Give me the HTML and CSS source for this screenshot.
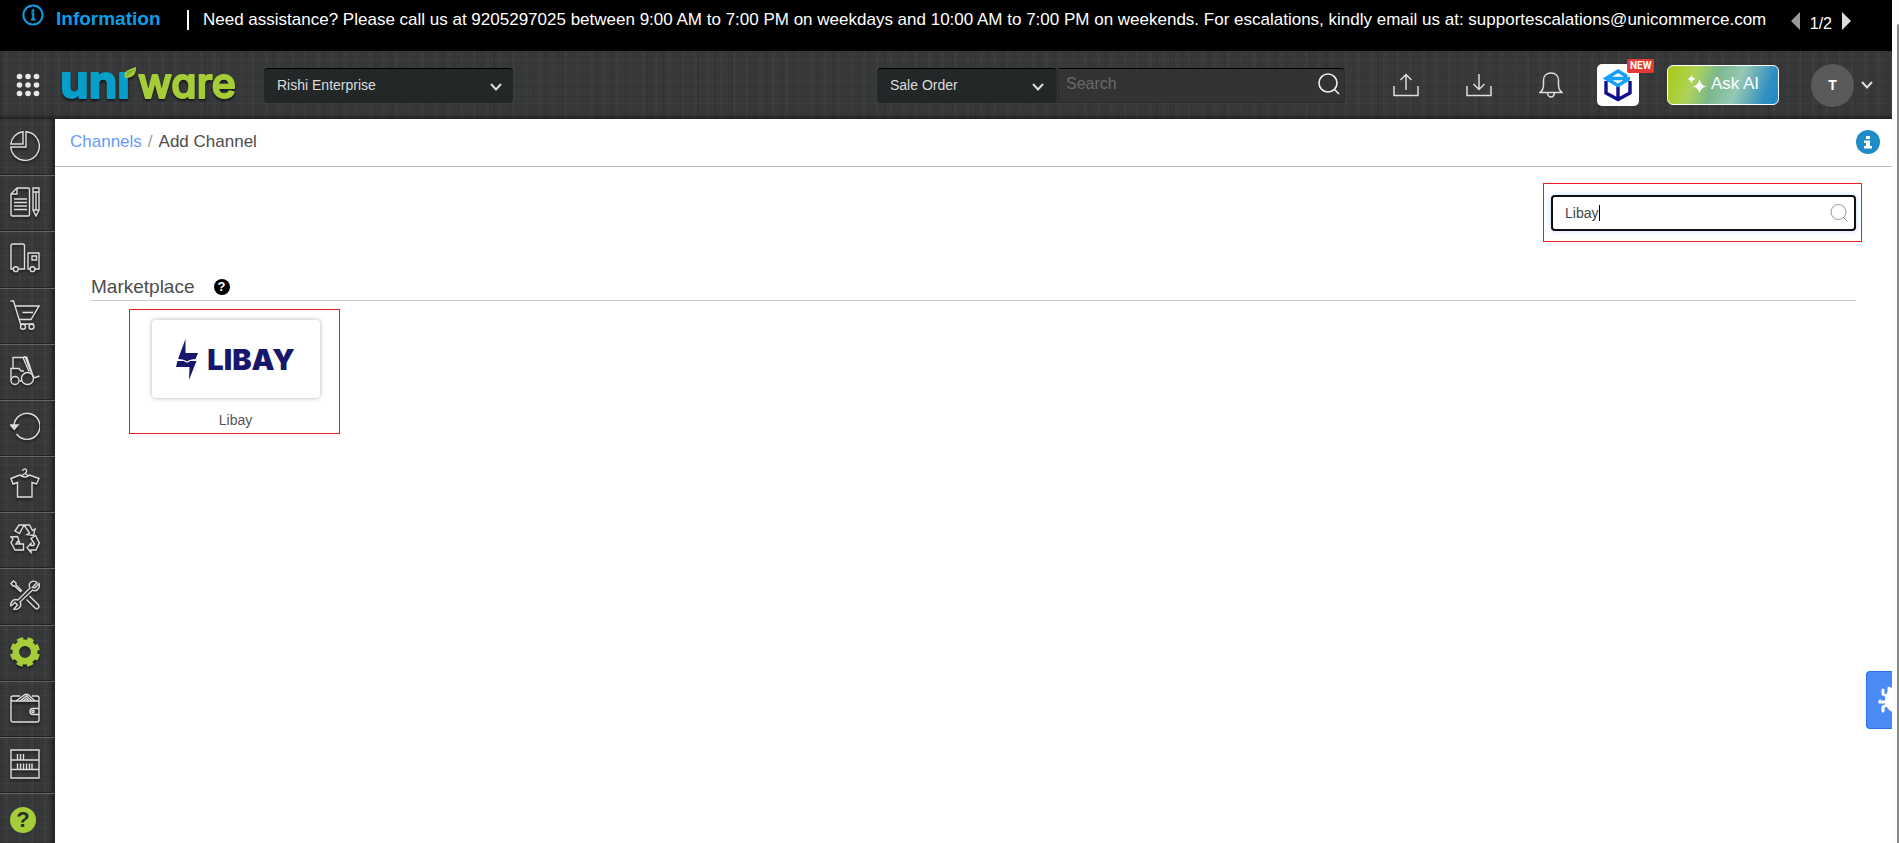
FILE: index.html
```html
<!DOCTYPE html>
<html lang="en">
<head>
    <meta charset="UTF-8">
    <meta name="viewport" content="width=device-width, initial-scale=1.0">
    <title>Add Channel - Uniware</title>
    <link rel="stylesheet" href="styles.css">
</head>
<body>
    <div class="notice">
        <svg class="notice-icon" viewBox="0 0 22 22" width="22" height="22" fill="none" stroke="#0a9fe8" stroke-width="2">
            <circle cx="11" cy="11" r="9.6"/>
            <path d="M9.4 9.4H11.2V15M9 15.4H13.4"/>
            <circle cx="11" cy="6.6" r=".6"/>
        </svg>
        <strong class="notice-title">Information</strong>
        <p class="notice-text">Need assistance? Please call us at 9205297025 between 9:00 AM to 7:00 PM on weekdays and 10:00 AM to 7:00 PM on weekends. For escalations, kindly email us at: supportescalations@unicommerce.com</p>
        <div class="pager">
            <button type="button" class="prev" aria-label="Previous"></button>
            <span>1/2</span>
            <button type="button" class="next" aria-label="Next"></button>
        </div>
    </div>

    <header class="topbar">
        <button type="button" class="icon-btn apps" aria-label="Apps">
            <svg viewBox="0 0 24 24" width="24" height="24" fill="#e8e8e8">
                <circle cx="3.5" cy="3.5" r="2.8"/><circle cx="12" cy="3.5" r="2.8"/><circle cx="20.5" cy="3.5" r="2.8"/>
                <circle cx="3.5" cy="12" r="2.8"/><circle cx="12" cy="12" r="2.8"/><circle cx="20.5" cy="12" r="2.8"/>
                <circle cx="3.5" cy="20.5" r="2.8"/><circle cx="12" cy="20.5" r="2.8"/><circle cx="20.5" cy="20.5" r="2.8"/>
            </svg>
        </button>
        <a href="#" class="logo">
            <svg viewBox="0 0 172 36" width="172" height="36">
                <text class="logo-uni" x="-2" y="31">un&#305;</text>
                <text class="logo-ware" x="76" y="31">ware</text>
                <path d="M63 11C61 4 66 3 74 0C74 7 72 11 63 11Z" fill="#a5cd39"/>
                <path d="M64 9L72 3M65 6L69 4" stroke="#6f9a1e" fill="none"/>
            </svg>
        </a>
        <div class="select facility">
            <select aria-label="Facility"><option>Rishi Enterprise</option></select>
            <svg viewBox="0 0 12 8" width="12" height="8"><path d="M1 1L6 6.5L11 1"/></svg>
        </div>

        <div class="search">
            <div class="select scope">
                <select aria-label="Search in"><option>Sale Order</option></select>
                <svg viewBox="0 0 12 8" width="12" height="8"><path d="M1 1L6 6.5L11 1"/></svg>
            </div>
            <div class="search-box">
                <input type="text" placeholder="Search" aria-label="Search">
                <button type="button" class="icon-btn" aria-label="Search">
                    <svg viewBox="0 0 22 22" width="22" height="22" fill="none" stroke="#eee" stroke-width="1.6">
                        <circle cx="10" cy="10" r="9"/><path d="M16 16L21 21"/>
                    </svg>
                </button>
            </div>
        </div>

        <nav class="tools">
            <button type="button" class="icon-btn" aria-label="Uploads">
                <svg viewBox="0 0 26 24" width="26" height="24" fill="none" stroke="#ddd" stroke-width="1.5">
                    <path d="M1 13V22.5H25V13"/><path d="M13 17V1.5M7.5 7L13 1.5L18.5 7"/>
                </svg>
            </button>
            <button type="button" class="icon-btn" aria-label="Downloads">
                <svg viewBox="0 0 26 24" width="26" height="24" fill="none" stroke="#ddd" stroke-width="1.5">
                    <path d="M1 13V22.5H25V13"/><path d="M13 1V16M7.5 11L13 16.5L18.5 11"/>
                </svg>
            </button>
            <button type="button" class="icon-btn" aria-label="Notifications">
                <svg viewBox="0 0 24 26" width="24" height="26" fill="none" stroke="#ddd" stroke-width="1.5">
                    <path d="M1 20.5C3.5 18.500 4.500 16 4.500 13V8.500C4.500 4 7.500 1 12 1S19.500 4 19.500 8.500V13C19.500 16 20.500 18.500 23 20.500Z"/>
                    <path d="M8.500 20.500A3.500 4.500 0 0 0 15.500 20.500"/>
                </svg>
            </button>
            <a href="#" class="cube" aria-label="New app">
                <svg viewBox="0 0 30 34" width="30" height="34" fill="none" stroke-width="3.4">
                    <path d="M3 13V25L15 31.500L27 25V13M15 18V31" stroke="#10108c"/>
                    <path d="M26.500 10.500L15 17.500L3 10.500L15 3L24 8.500M3 10.500H27" stroke="#16a0fb"/>
                </svg>
                <span class="badge">NEW</span>
            </a>
            <button type="button" class="ask">
                <svg viewBox="0 0 20 20" width="20" height="20" fill="#fff">
                    <path d="M12.500 5Q13.500 11.500 19.500 12.500Q13.500 13.500 12.500 19.500Q11.500 13.500 5.500 12.500Q11.500 11.500 12.500 5Z"/>
                    <path d="M4.500 .5Q5.200 4.300 9 5Q5.200 5.700 4.500 9.500Q3.800 5.700 .2 5Q3.800 4.300 4.500 .5Z"/>
                </svg>
                Ask AI
            </button>
            <button type="button" class="user" aria-label="Account">
                <span class="avatar">T</span>
                <svg viewBox="0 0 12 8" width="12" height="8"><path d="M1 1L6 6.5L11 1"/></svg>
            </button>
        </nav>
    </header>

    <div class="layout">
        <nav class="sidebar">
            <a href="#" aria-label="Dashboard">
                <svg viewBox="0 0 30 30"><path d="M16 .8A14.300 14.300 0 1 1 .8 16H16Z"/><path d="M13 .8A14 14 0 0 0 .8 13H13Z"/></svg>
            </a>
            <a href="#" aria-label="Orders">
                <svg viewBox="0 0 30 30"><path d="M7 1H18Q19.500 1 19.500 2.500V27.500Q19.500 29 18 29H2.500Q1 29 1 27.500V7ZM7 1V7H1M4 12H17M4 15.500H17M4 19H17M4 22.500H17"/><path d="M23 1H29V23L26 29L23 23ZM23 5H29M23 23H29M26 5V23"/></svg>
            </a>
            <a href="#" aria-label="Products">
                <svg viewBox="0 0 30 30"><path d="M3.500 26H1V3Q1 1 3 1H12.500Q14.500 1 14.500 3V26H8"/><path d="M20 26H18V10H29V26H25M22 13H26.500V17H22Z"/><circle cx="5.800" cy="26.200" r="2.400"/><circle cx="22.500" cy="26.200" r="2.400"/></svg>
            </a>
            <a href="#" aria-label="Purchase">
                <svg viewBox="0 0 30 30"><path d="M.5 1H3.500L10.500 24H24M5 6H29L21 19.500H9M12.500 12.500H23"/><circle cx="13" cy="26.800" r="2.500"/><circle cx="21.500" cy="26.800" r="2.500"/></svg>
            </a>
            <a href="#" aria-label="Inbound">
                <svg viewBox="0 0 30 30"><path d="M3 12V1.500H13L19 15.500M1 24V12.500H9L11 15H14M16.500 .5L23.500 21.500H25.500L29.500 20M13 1.500L15 .5L21 16M9.500 25H12"/><circle cx="5" cy="24.500" r="4"/><circle cx="17.500" cy="22.500" r="6"/></svg>
            </a>
            <a href="#" aria-label="Returns">
                <svg viewBox="0 0 30 30"><path d="M6.500 22A13 13 0 1 0 4 14"/><path d="M.5 13H8L4.200 17.500Z" fill="#ddd"/></svg>
            </a>
            <a href="#" aria-label="Inventory">
                <svg viewBox="0 0 30 30"><path d="M10 7L1 10.500L3 16L7.500 14.500V29H22V14.500L26.500 16L29 10.500L19.500 7Q15 11 10 7Z"/><path d="M11 8L15 5.500L19 8M15 5.500Q18 3 15.500 1Q13 .5 12.500 3"/></svg>
            </a>
            <a href="#" aria-label="Reshipment">
                <svg viewBox="0 0 30 30"><path d="M5 7L9 1H14L9.500 9.500ZM14 1H19.500L22.500 6.500L25 5L23.500 11.500L17 10.500L19.500 9ZM21 14.500L25.500 11.500L29.300 19L26 26H21V28.500L17 23.500L21 19.500V21.500H23.500L24.500 20ZM13.500 20V26H5L1 18.500L3 15L1 13L7.500 12.500L9.500 18.500L7.500 17.500L6 20Z"/></svg>
            </a>
            <a href="#" aria-label="Tools">
                <svg viewBox="0 0 30 30"><path d="M1 3.500L3.500 1L6 3L6 5L11.500 10.500L10.500 11.500L4.500 6H3ZM19.500 16L28.500 25Q29.500 27 28 28.500Q26.500 29.500 25 28L16.500 19.500"/><path d="M22.500 7.500L27 2.500Q24 0 21 2Q18 4.500 20 8L8 20Q4.500 18.500 2 21.500Q0 24 1 26L5 22.500L7.500 25L4 29Q6.500 30 9 28Q12 25 10 22L22.500 10Q26 12 28.500 8.500Q30 6 29 3.500L25 8Z"/></svg>
            </a>
            <a href="#" aria-label="Settings">
                <svg viewBox="0 0 30 30" class="gear"><circle cx="15" cy="15" r="9.200" stroke-width="6.600"/><circle cx="15" cy="15" r="12.800" stroke-width="4.200" stroke-dasharray="6.050 4.003" transform="rotate(9 15 15)"/></svg>
            </a>
            <a href="#" aria-label="Billing">
                <svg viewBox="0 0 30 30"><path d="M6 8H29V27Q29 29 27 29H3Q1 29 1 27V5Q1 3 3 3H10M1 6Q1 8 3 8H6M22 3H27Q29 3 29 5V8"/><path d="M6 8L15 1.500H18L25 8M10 8L16.500 3L22 8M13 8L16.500 5.500L19 8M29 15.500H22.500Q20 15.500 20 18.500T22.500 21.500H29"/><circle cx="23" cy="18.500" r="1.200"/></svg>
            </a>
            <a href="#" aria-label="Warehouse">
                <svg viewBox="0 0 30 30"><path d="M1 1H29V29H1ZM1 11H29M1 20.500H29M7.500 11V5M10.500 11V5M13.500 11V5M7.500 20.500V14.500M10.500 20.500V14.500M13.500 20.500V14.500M16.500 20.500V14.500M19.500 20.500V14.500M22 20.500V14.500"/></svg>
            </a>
            <a href="#" class="help" aria-label="Help"><span>?</span></a>
        </nav>

        <main class="main">
            <div class="breadcrumb">
                <a href="#">Channels</a><span class="slash">/</span><span>Add Channel</span>
                <button type="button" class="info" aria-label="Page info">
                    <svg viewBox="0 0 24 24" width="24" height="24">
                        <circle cx="12" cy="12" r="12" fill="#1f8bc9"/>
                        <path d="M10 6H14V9H10ZM8 10.500H14V16H16V18.500H8V16H10V13H8Z" fill="#fff"/>
                    </svg>
                </button>
            </div>

            <div class="filter">
                <div class="highlight filter-highlight">
                    <div class="channel-search">
                        <input type="text" value="Libay" aria-label="Search channel">
                        <span class="caret"></span>
                        <svg viewBox="0 0 18 18" width="18" height="18" fill="none" stroke="#999">
                            <circle cx="8.500" cy="8" r="7.500"/><path d="M13.500 13.500L17.500 17.500"/>
                        </svg>
                    </div>
                </div>
            </div>

            <section class="channels">
                <h2>Marketplace <span class="hint">?</span></h2>
                <a href="#" class="highlight channel">
                    <span class="card">
                        <svg viewBox="0 0 22 42" width="22" height="42" fill="#17186b">
                            <path d="M9.500 0V14H22L19.500 20Q14 20 11 22.500Q8 20 2 20Z"/>
                            <path d="M1.500 22H8Q11 25 14 22H20.500L13 41L13.500 28H0Z"/>
                        </svg>
                        <span class="card-brand">LIBAY</span>
                    </span>
                    <span class="channel-name">Libay</span>
                </a>
            </section>
        </main>
    </div>

    <button type="button" class="bug" aria-label="Report a bug">
        <svg viewBox="0 0 14 28" width="14" height="28" fill="none" stroke="#fff" stroke-width="3" stroke-linecap="round">
            <path d="M14 1Q7 7 7 14Q7 22 14 26Z" fill="#fff" stroke="none"/>
            <path d="M11 7V2M9 10L5 8V4M8 16H2V15M9 19L5 21V25"/>
        </svg>
    </button>
    <div class="scrollbar"><span></span></div>
</body>
</html>
```
FILE: styles.css
```css
* {
    box-sizing: border-box;
}

body {
    font-family: "Liberation Sans", Arial, sans-serif;
    font-size: 14px;
    color: #4d4d4d;
    background: #fff;
    margin: 0;
    padding-right: 7px;
    min-height: 100vh;
    display: flex;
    flex-direction: column;
}

a {
    text-decoration: none;
}

button {
    font-family: inherit;
    border: none;
    background: none;
    padding: 0;
    cursor: pointer;
}

svg {
    display: block;
    flex: none;
}

/* notice bar */
.notice {
    display: flex;
    align-items: flex-start;
    height: 51px;
    padding: 4px 41px 0 22px;
    background: #000;
    color: #fff;
}

.notice-title {
    width: 131px;
    margin: 4px 0 0 12px;
    font-size: 19px;
    line-height: 22px;
    color: #0a9fe8;
}

.notice-text {
    flex: 1;
    margin: 6px 0 0;
    padding-left: 14px;
    border-left: 2px solid #fff;
    font-size: 17px;
    line-height: 20px;
    white-space: nowrap;
}

.pager {
    display: flex;
    align-items: flex-start;
    gap: 10px;
    margin-top: 8px;
    font-size: 16px;
    line-height: 24px;
}

.prev,
.next {
    border-style: solid;
    border-color: transparent;
    border-width: 9px 0;
}

.prev {
    border-right: 9px solid #999;
}

.next {
    border-left: 9px solid #ddd;
}

/* top bar */
.topbar,
.sidebar {
    background-color: #37383a;
    background-image:
        repeating-linear-gradient(90deg, rgba(0, 0, 0, 0.06) 0 1px, transparent 1px 5px, rgba(255, 255, 255, 0.02) 5px 8px, transparent 8px 13px),
        repeating-linear-gradient(90deg, rgba(0, 0, 0, 0.05) 0 2px, transparent 2px 17px),
        repeating-linear-gradient(0deg, rgba(0, 0, 0, 0.06) 0 1px, transparent 1px 4px, rgba(255, 255, 255, 0.02) 4px 5px, transparent 5px 11px);
}

.topbar {
    display: flex;
    align-items: center;
    height: 68px;
    padding: 0 19px 0 16px;
    box-shadow: inset 0 -5px 5px -3px rgba(0, 0, 0, 0.5);
}

.apps {
    margin-right: 22px;
}

.logo svg {
    overflow: visible;
    filter: drop-shadow(0 2px 1px rgba(0, 0, 0, 0.6));
}

.logo text {
    font-family: Inter, "Liberation Sans", sans-serif;
    font-feature-settings: "cv11";
    stroke-linejoin: round;
}

.logo-uni {
    font-size: 46px;
    font-weight: 700;
    fill: #079fc9;
    stroke: #079fc9;
    stroke-width: 2px;
}

.logo-ware {
    font-size: 41px;
    font-weight: 500;
    fill: #a5cd39;
    stroke: #a5cd39;
    stroke-width: 2px;
}

.select {
    position: relative;
    height: 35px;
}

.select select {
    appearance: none;
    width: 100%;
    height: 100%;
    padding: 0 30px 2px 13px;
    border: none;
    border-top: 1px solid #000;
    border-radius: 4px;
    background: #232728;
    color: #ddd;
    font: inherit;
}

.select svg {
    position: absolute;
    right: 11px;
    top: 15px;
    pointer-events: none;
}

.select svg,
.user svg {
    fill: none;
    stroke: #ddd;
    stroke-width: 2;
}

.facility {
    width: 249px;
    margin-left: 30px;
}

.search {
    display: flex;
    gap: 1px;
    margin-left: auto;
}

.scope {
    width: 180px;
}

.scope svg {
    right: 13px;
}

.search-box {
    display: flex;
    align-items: center;
    width: 287px;
    height: 35px;
    padding: 0 4px 2px 7px;
    border: 1px solid #2a2c2d;
    border-top-color: #000;
    border-radius: 0 4px 4px 0;
    background: #333;
}

.search-box input {
    flex: 1;
    min-width: 0;
    padding: 0;
    border: none;
    outline: none;
    background: none;
    color: #ddd;
    font: inherit;
    font-size: 16px;
}

.search-box input::placeholder {
    color: #6a6a6a;
}

.tools {
    display: flex;
    align-items: center;
    gap: 47px;
    margin-left: 48px;
}

.cube {
    position: relative;
    display: flex;
    align-items: center;
    justify-content: center;
    width: 42px;
    height: 42px;
    margin-left: -13px;
    border-radius: 5px;
    background: #fff;
}

.badge {
    position: absolute;
    top: -5px;
    left: 30px;
    padding: 0 3px;
    border-radius: 2px;
    background: #e53935;
    color: #fff;
    font-family: Roboto, sans-serif;
    font-size: 10px;
    font-weight: 700;
    line-height: 14px;
}

.ask {
    display: flex;
    align-items: center;
    justify-content: center;
    gap: 4px;
    width: 112px;
    height: 40px;
    margin-left: -19px;
    padding-bottom: 2px;
    border: 1px solid #fff;
    border-radius: 6px;
    background: linear-gradient(110deg, #a9ca12 0%, #add25c 25%, #7ab88c 42%, #96c8b4 62%, #2e8ec2 88%, #2389cc 100%);
    color: #fff;
    font-size: 17px;
}

.user {
    display: flex;
    align-items: center;
    gap: 7px;
    margin-left: -15px;
}

.avatar {
    width: 43px;
    border-radius: 50%;
    background: #5a5a5a;
    color: #fff;
    font-size: 14px;
    font-weight: 700;
    line-height: 43px;
}

/* side menu */
.layout {
    display: flex;
    flex: 1;
}

.sidebar {
    display: flex;
    flex-direction: column;
    width: 55px;
    box-shadow: inset -5px 0 5px -3px rgba(0, 0, 0, 0.5);
}

.sidebar a {
    flex: 1;
    min-height: 44px;
    padding: 11px 0 0 10px;
    border-top: 1px solid #636466;
    box-shadow: 0 -1px 0 #222;
}

.sidebar a:first-child {
    border-top-color: transparent;
    box-shadow: none;
}

.sidebar svg {
    width: 30px;
    height: 30px;
    fill: none;
    stroke: #ddd;
    stroke-width: 1.4;
    filter: drop-shadow(0 2px 1px rgba(0, 0, 0, 0.5));
}

.sidebar .gear {
    stroke: #a5cd39;
}

.sidebar .help {
    flex: none;
    height: 50px;
    padding-top: 13px;
}

.help span {
    display: block;
    width: 26px;
    border-radius: 50%;
    background: #a5cd39;
    color: #2b2c2d;
    font-size: 22px;
    font-weight: 700;
    line-height: 26px;
    text-align: center;
}

/* content */
.main {
    flex: 1;
    min-width: 0;
}

.breadcrumb {
    display: flex;
    align-items: center;
    height: 48px;
    padding: 0 12px 1px 15px;
    border-bottom: 1px solid #bbb;
    font-size: 17px;
    line-height: 20px;
}

.breadcrumb a {
    color: #669aff;
}

.slash {
    margin: 0 6px;
    color: #999;
}

.info {
    margin-left: auto;
}

.highlight {
    border: 1px solid #ed1c24;
}

.filter {
    display: flex;
    justify-content: flex-end;
    padding: 16px 30px 0;
}

.filter-highlight {
    padding: 11px 5px 10px 7px;
}

.channel-search {
    position: relative;
}

.channel-search input {
    display: block;
    width: 305px;
    height: 36px;
    padding: 0 36px 0 12px;
    border: 2px solid #101010;
    border-radius: 4px;
    outline: none;
    box-shadow: 0 0 5px rgba(102, 154, 255, 0.4);
    color: #444;
    font: inherit;
}

.channel-search svg {
    position: absolute;
    right: 8px;
    top: 9px;
}

.caret {
    position: absolute;
    left: 48px;
    top: 10px;
    width: 1px;
    height: 16px;
    background: #000;
}

.channels {
    padding: 34px 36px 0;
}

.channels h2 {
    display: flex;
    align-items: center;
    gap: 19px;
    margin: 0 0 8px;
    padding-bottom: 2px;
    border-bottom: 1px solid #ccc;
    font-size: 19px;
    font-weight: 400;
    line-height: 22px;
}

.hint {
    width: 16px;
    border-radius: 50%;
    background: #000;
    color: #fff;
    font-size: 13px;
    font-weight: 700;
    line-height: 16px;
    text-align: center;
}

.channel {
    display: flex;
    flex-direction: column;
    align-items: center;
    gap: 13px;
    width: 211px;
    margin-left: 38px;
    padding: 10px 0 4px 2px;
    color: #555;
}

.card {
    display: flex;
    align-items: center;
    justify-content: center;
    gap: 9px;
    width: 168px;
    height: 78px;
    padding-top: 2px;
    border-radius: 4px;
    box-shadow: 0 0 5px rgba(0, 0, 0, 0.3);
}

.card-brand {
    color: #17186b;
    font-family: Inter, "Liberation Sans", sans-serif;
    font-size: 29px;
    font-weight: 900;
    line-height: 34px;
}

.channel-name {
    line-height: 18px;
}

/* pinned to the window edge */
.bug {
    position: fixed;
    right: 7px;
    top: 671px;
    display: flex;
    align-items: center;
    justify-content: flex-end;
    width: 26px;
    height: 58px;
    border: 1px solid #2f74ea;
    border-right: none;
    border-radius: 4px 0 0 4px;
    background: #4a8af4;
}

.scrollbar {
    position: fixed;
    top: 0;
    right: 0;
    bottom: 0;
    width: 7px;
    padding: 24px 0 0 5px;
    background: #fcfcfc;
}

.scrollbar span {
    display: block;
    height: 100%;
    border-radius: 2px 0 0 0;
    background: #888;
}
```
